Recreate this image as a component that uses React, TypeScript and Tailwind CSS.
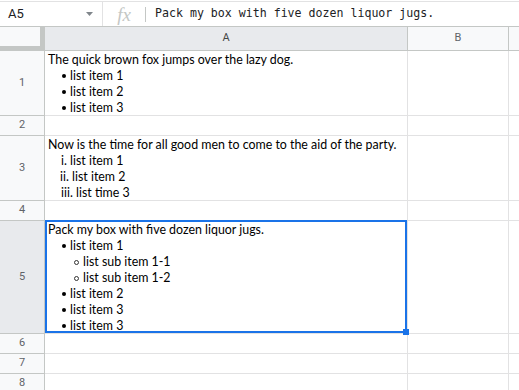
import React from "react";

const cellFont = { fontFamily: "Lato, 'Open Sans', sans-serif" };

type Line = { text: string; kind?: "plain" | "dot" | "circle"; indent: string };

function RowHeader({ n, selected, h }: { n: number; selected?: boolean; h: string }) {
  return (
    <div
      className={`${h} flex items-center justify-center border-r border-b border-[#c4c7c5] text-[11px] text-[#5f6368] ${
        selected ? "bg-[#e8eaed]" : "bg-[#f8f9fa]"
      }`}
      style={{ fontFamily: "Roboto, Arial, sans-serif" }}
    >
      {n}
    </div>
  );
}

function Cell({ h, children, className = "" }: { h: string; children?: React.ReactNode; className?: string }) {
  return (
    <div className={`${h} border-r border-b border-[#e2e2e3] bg-white ${className}`}>{children}</div>
  );
}

function Lines({ lines }: { lines: Line[] }) {
  return (
    <div className="pl-[3px] pt-[1px] text-[12.4px] leading-[16px] text-black whitespace-nowrap" style={cellFont}>
      {lines.map((l, i) => (
        <div key={i} className={`${l.indent} flex items-center h-[16px]`}>
          {l.kind === "dot" && <span className="inline-block w-[4px] h-[4px] rounded-full bg-black mr-[4px]" />}
          {l.kind === "circle" && (
            <span className="inline-block w-[5px] h-[5px] rounded-full border border-[#333] mr-[4px]" />
          )}
          <span>{l.text}</span>
        </div>
      ))}
    </div>
  );
}

export default function App() {
  return (
    <div className="w-[519px] h-[390px] overflow-hidden bg-white">
      {/* formula bar */}
      <div className="h-[2px] border-b border-[#e2e2e3]" />
      <div className="h-[25px] flex items-center border-b border-[#c4c7c5] bg-white">
        <div className="w-[103px] h-full flex items-center justify-between pl-[8px] pr-[9px] border-r border-[#e2e2e3]">
          <span className="text-[13px] text-[#202124]" style={{ fontFamily: "Roboto, Arial, sans-serif" }}>
            A5
          </span>
          <svg width="7" height="4" viewBox="0 0 7 4">
            <path d="M0 0 L7 0 L3.5 4 Z" fill="#80868b" />
          </svg>
        </div>
        <div className="w-[42px] h-full flex items-center justify-center">
          <span
            className="text-[19px] italic text-[#c4c7c5] leading-none"
            style={{ fontFamily: "'Liberation Serif', 'DejaVu Serif', serif" }}
          >
            fx
          </span>
        </div>
        <div className="w-px h-[15px] bg-[#c4c7c5]" />
        <div
          className="pl-[9px] text-[11.6px] text-[#202124] whitespace-nowrap"
          style={{ fontFamily: "'DejaVu Sans Mono', 'Liberation Mono', monospace" }}
        >
          Pack my box with five dozen liquor jugs.
        </div>
      </div>

      {/* grid */}
      <div className="grid grid-cols-[45px_363px_101px_1fr]">
        {/* header row */}
        <div className="h-[24px] bg-[#f8f9fa] border-r-[5px] border-b-[5px] border-[#c4c7c5]" />
        <div
          className="h-[24px] flex items-center justify-center bg-[#e8eaed] border-r border-b border-[#c4c7c5] text-[11px] text-[#444746]"
          style={{ fontFamily: "Roboto, Arial, sans-serif" }}
        >
          A
        </div>
        <div
          className="h-[24px] flex items-center justify-center bg-[#f8f9fa] border-r border-b border-[#c4c7c5] text-[11px] text-[#5f6368]"
          style={{ fontFamily: "Roboto, Arial, sans-serif" }}
        >
          B
        </div>
        <div className="h-[24px] bg-[#f8f9fa] border-b border-[#c4c7c5]" />

        {/* row 1 */}
        <RowHeader n={1} h="h-[65px]" />
        <Cell h="h-[65px]">
          <Lines
            lines={[
              { text: "The quick brown fox jumps over the lazy dog.", indent: "" },
              { text: "list item 1", kind: "dot", indent: "pl-[14px]" },
              { text: "list item 2", kind: "dot", indent: "pl-[14px]" },
              { text: "list item 3", kind: "dot", indent: "pl-[14px]" },
            ]}
          />
        </Cell>
        <Cell h="h-[65px]" />
        <Cell h="h-[65px]" className="border-r-0" />

        {/* row 2 */}
        <RowHeader n={2} h="h-[20px]" />
        <Cell h="h-[20px]" />
        <Cell h="h-[20px]" />
        <Cell h="h-[20px]" className="border-r-0" />

        {/* row 3 */}
        <RowHeader n={3} h="h-[65px]" />
        <Cell h="h-[65px]">
          <Lines
            lines={[
              { text: "Now is the time for all good men to come to the aid of the party.", indent: "" },
              { text: "i. list item 1", indent: "pl-[13px]" },
              { text: "ii. list item 2", indent: "pl-[12px]" },
              { text: "iii. list time 3", indent: "pl-[13px]" },
            ]}
          />
        </Cell>
        <Cell h="h-[65px]" />
        <Cell h="h-[65px]" className="border-r-0" />

        {/* row 4 */}
        <RowHeader n={4} h="h-[20px]" />
        <Cell h="h-[20px]" />
        <Cell h="h-[20px]" />
        <Cell h="h-[20px]" className="border-r-0" />

        {/* row 5 */}
        <RowHeader n={5} h="h-[113px]" selected />
        <Cell h="h-[113px]" className="relative">
          <Lines
            lines={[
              { text: "Pack my box with five dozen liquor jugs.", indent: "" },
              { text: "list item 1", kind: "dot", indent: "pl-[14px]" },
              { text: "list sub item 1-1", kind: "circle", indent: "pl-[26px]" },
              { text: "list sub item 1-2", kind: "circle", indent: "pl-[26px]" },
              { text: "list item 2", kind: "dot", indent: "pl-[14px]" },
              { text: "list item 3", kind: "dot", indent: "pl-[14px]" },
              { text: "list item 3", kind: "dot", indent: "pl-[14px]" },
            ]}
          />
          <div className="absolute left-0 right-0 top-[-1px] bottom-0 border-2 border-[#1a73e8] pointer-events-none" />
          <div className="absolute right-[-2px] bottom-[-2px] w-[6px] h-[6px] bg-[#1a73e8]" />
        </Cell>
        <Cell h="h-[113px]" />
        <Cell h="h-[113px]" className="border-r-0" />

        {/* rows 6-8 */}
        {[6, 7, 8].map((n) => (
          <React.Fragment key={n}>
            <RowHeader n={n} h="h-[20px]" />
            <Cell h="h-[20px]" />
            <Cell h="h-[20px]" />
            <Cell h="h-[20px]" className="border-r-0" />
          </React.Fragment>
        ))}
      </div>
    </div>
  );
}
